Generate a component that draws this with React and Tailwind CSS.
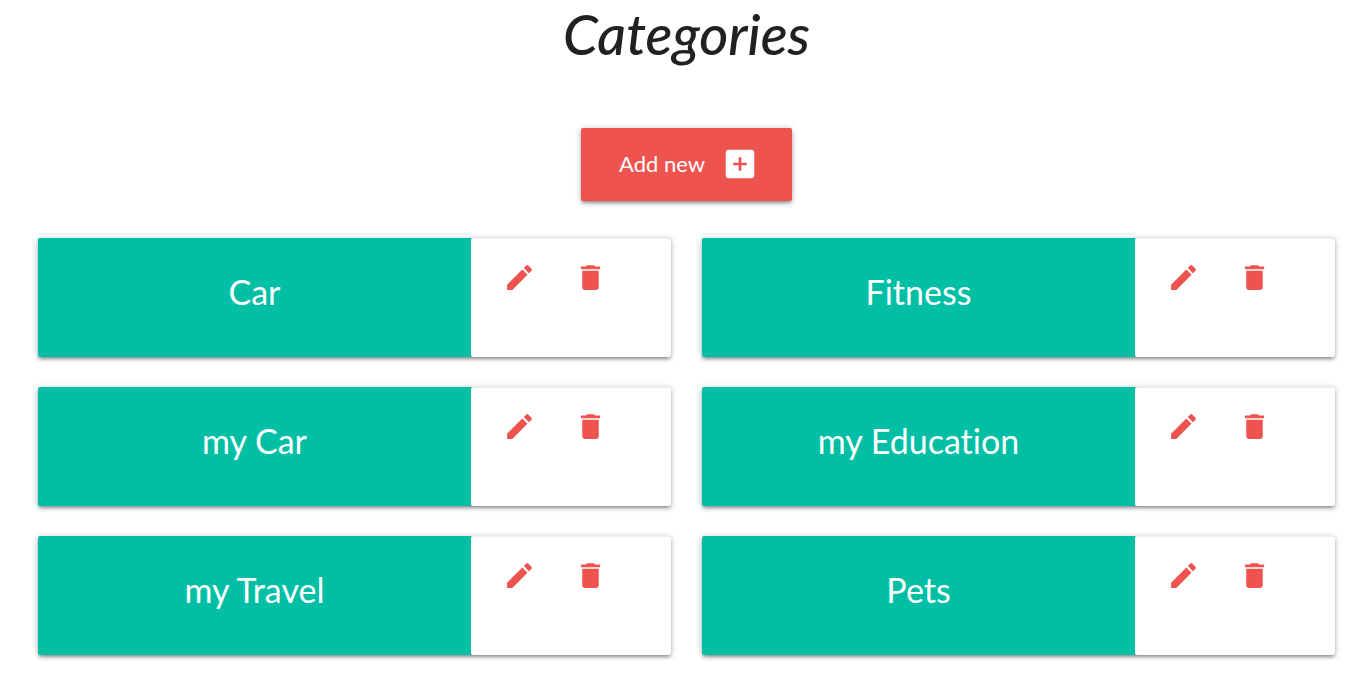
const ELEVATION =
  "shadow-[0_3px_3px_0_rgba(0,0,0,0.16),0_4px_2px_-3px_rgba(0,0,0,0.2),0_1px_6px_0_rgba(0,0,0,0.26)]";

const CATEGORIES = ["Car", "Fitness", "my Car", "my Education", "my Travel", "Pets"];

function EditIcon() {
  return (
    <svg viewBox="0 0 24 24" className="size-[33px] fill-current" aria-hidden="true">
      <path d="M3 17.25V21h3.75L17.81 9.94l-3.75-3.75L3 17.25zM20.71 7.04a.996.996 0 0 0 0-1.41l-2.34-2.34a.996.996 0 0 0-1.41 0l-1.83 1.83 3.75 3.75 1.83-1.83z" />
    </svg>
  );
}

function DeleteIcon() {
  return (
    <svg viewBox="0 0 24 24" className="size-[33px] fill-current" aria-hidden="true">
      <path d="M6 19c0 1.1.9 2 2 2h8c1.1 0 2-.9 2-2V7H6v12zM19 4h-3.5l-1-1h-5l-1 1H5v2h14V4z" />
    </svg>
  );
}

function AddBoxIcon() {
  return (
    <svg viewBox="0 0 24 24" className="size-[38px]" aria-hidden="true">
      <rect x="3" y="3" width="18" height="18" rx="2" fill="#fff" />
      <path d="M12 8.4v7.2M8.4 12h7.2" stroke="#ef5350" strokeWidth="1.7" strokeLinecap="round" />
    </svg>
  );
}

function CategoryCard({ name }) {
  return (
    <article className={`flex h-[119px] rounded-xs bg-[#00bfa5] ${ELEVATION}`}>
      <h2 className="flex-1 pt-8 text-center text-[34px] leading-[44px] text-white [font-variant-ligatures:none]">
        {name}
      </h2>
      <div className="flex w-[200px] items-start gap-[38px] rounded-xs border-t border-[#eee] bg-white pt-[22px] pl-8 text-[#ef5350]">
        <button type="button" aria-label={`Edit ${name}`}>
          <EditIcon />
        </button>
        <button type="button" aria-label={`Delete ${name}`}>
          <DeleteIcon />
        </button>
      </div>
    </article>
  );
}

export default function App() {
  return (
    <main className="pr-[27px] pb-9 pl-[38px] font-[Lato,sans-serif]">
      <h1 className="text-center text-[56px] leading-[68px] font-medium text-[#212121] italic">
        Categories
      </h1>
      <div className="mt-[60px] flex justify-center">
        <button
          type="button"
          className={`flex h-[73px] items-center gap-4 rounded-xs bg-[#ef5350] pr-[33px] pb-[2px] pl-[38px] text-[22px] text-white ${ELEVATION}`}
        >
          Add new
          <AddBoxIcon />
        </button>
      </div>
      <section className="mt-[37px] grid grid-cols-2 gap-x-[31px] gap-y-[30px]">
        {CATEGORIES.map((name) => (
          <CategoryCard key={name} name={name} />
        ))}
      </section>
    </main>
  );
}
